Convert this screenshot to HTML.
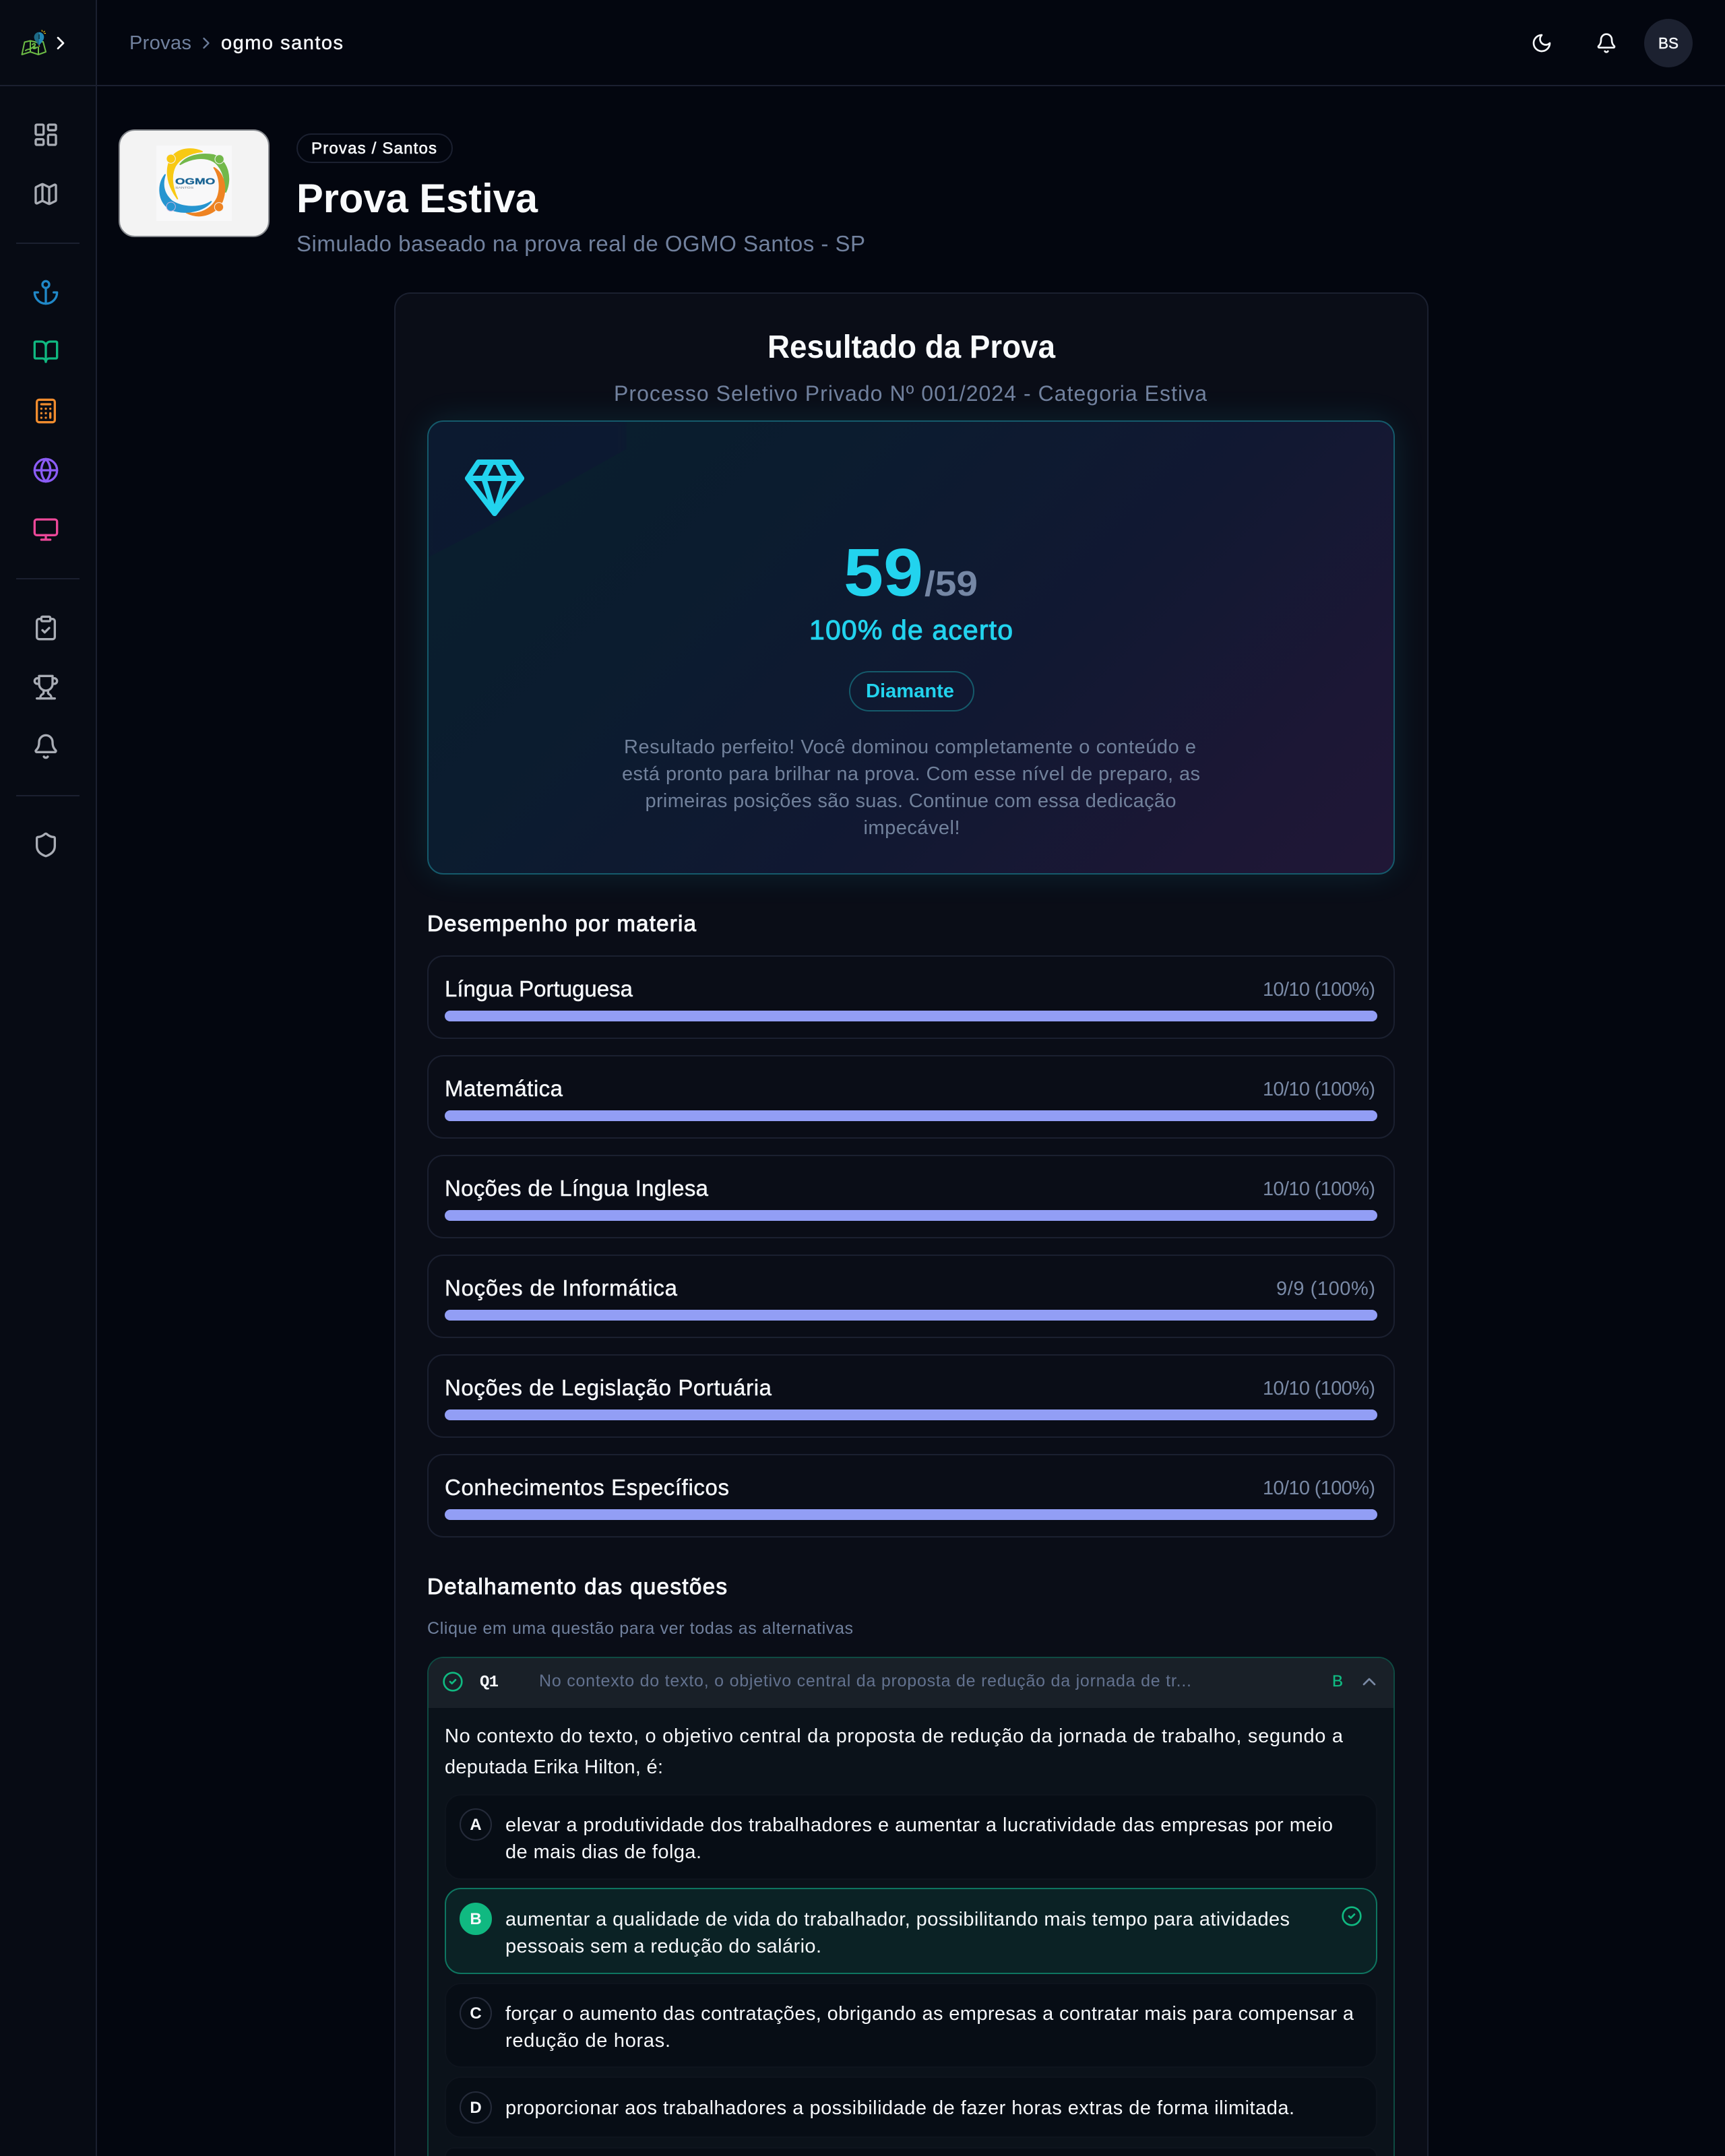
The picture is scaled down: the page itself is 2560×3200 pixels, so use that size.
<!DOCTYPE html>
<html lang="pt-BR">
<head>
<meta charset="utf-8">
<title>Prova Estiva</title>
<style>
html,body{margin:0;padding:0;background:#03060f;width:2560px;height:3200px;overflow:hidden}
*{box-sizing:border-box}
.abs{position:absolute}
#page{position:relative;width:2560px;height:3200px;overflow:hidden;background:#03060f}
#side{left:0;top:0;width:144px;height:3200px;background:#070b14;border-right:2px solid #1b2030}
#top{left:144px;top:0;width:2416px;height:128px;background:#03060f}
#topline{left:0;top:126px;width:2560px;height:2px;background:#1b2030}
.div{left:24px;width:94px;height:2px;background:#1b2030}
#logo{left:176px;top:192px;width:224px;height:160px;background:#f3f3f3;border:2.5px solid #85888d;border-radius:24px}
#logoimg{left:232px;top:216px;width:112px;height:112px;background:#f8f8f9}
#badge{left:440px;top:198px;width:232px;height:44px;border:2px solid #1b2030;border-radius:22px}
#avatar{left:2440px;top:28px;width:72px;height:72px;border-radius:50%;background:#1c2130}
#card{left:585px;top:434px;width:1535px;height:2766px;background:#0a0d17;border:2px solid #1b2030;border-bottom:0;border-radius:24px 24px 0 0}
#hero{left:634px;top:624px;width:1436px;height:674px;border:2px solid #155a6b;border-radius:24px;overflow:hidden;background:linear-gradient(135deg,#091f2d 0%,#0b1c2f 30%,#111832 60%,#1c1735 85%,#201736 100%);box-shadow:0 0 48px rgba(34,211,238,.12)}
#blob{left:-6px;top:-6px;width:300px;height:210px;background:#15123a;opacity:.3;clip-path:polygon(0 0,100% 0,100% 22%,30% 78%,0 100%);filter:blur(6px)}
.sub{left:634px;width:1436px;height:124px;border:2px solid #1b2030;border-radius:24px;background:#0a0d17}
.bar{left:660px;width:1384px;height:16px;border-radius:8px;background:#929ef5}
#qbox{left:634px;top:2459px;width:1436px;height:741px;background:#0b121a;border:2px solid #0f4a42;border-bottom:0;border-radius:24px 24px 0 0;overflow:hidden}
#qhead{left:0;top:0;width:100%;height:74px;background:#192028}
.opt{left:660px;width:1384px;border:2px solid #0e141d;border-radius:24px;background:#070d15}
#optb{background:#0b2225;border-color:#0e7560}
.circ{left:682px;width:48px;height:48px;border-radius:50%;border:2px solid #252b3a}
svg.ov{position:absolute;left:0;top:0;display:block}
text{font-family:"Liberation Sans",sans-serif;white-space:pre}
.mut{fill:#71819e}
.wht{fill:#f6f8fb}
.med{stroke:#f6f8fb;stroke-width:.45}
.ic{fill:none;stroke-linecap:round;stroke-linejoin:round}
</style>
</head>
<body>
<div id="page">
  <div id="side" class="abs"></div>
  <div id="top" class="abs"></div>
  <div id="topline" class="abs"></div>
  <div class="abs div" style="top:360px"></div>
  <div class="abs div" style="top:858px"></div>
  <div class="abs div" style="top:1180px"></div>

  <div id="logo" class="abs"></div>
  <div id="logoimg" class="abs"></div>
  <div id="badge" class="abs"></div>
  <div id="avatar" class="abs"></div>

  <div id="card" class="abs"></div>
  <div id="hero" class="abs"><div id="blob" class="abs"></div></div>

  <div class="abs sub" style="top:1418px"></div><div class="abs bar" style="top:1500px"></div>
  <div class="abs sub" style="top:1566px"></div><div class="abs bar" style="top:1648px"></div>
  <div class="abs sub" style="top:1714px"></div><div class="abs bar" style="top:1796px"></div>
  <div class="abs sub" style="top:1862px"></div><div class="abs bar" style="top:1944px"></div>
  <div class="abs sub" style="top:2010px"></div><div class="abs bar" style="top:2092px"></div>
  <div class="abs sub" style="top:2158px"></div><div class="abs bar" style="top:2240px"></div>

  <div id="qbox" class="abs"><div id="qhead" class="abs"></div></div>
  <div class="abs opt" style="top:2663px;height:127px"></div>
  <div id="optb" class="abs opt" style="top:2802px;height:128px"></div>
  <div class="abs opt" style="top:2943px;height:126px"></div>
  <div class="abs opt" style="top:3082px;height:91px"></div>
  <div class="abs opt" style="top:3187px;height:13px;border-bottom:0;border-radius:24px 24px 0 0"></div>
  <div class="abs circ" style="top:2684px"></div>
  <div class="abs circ" style="top:2824px;background:#10b981;border-color:#10b981"></div>
  <div class="abs circ" style="top:2964px"></div>
  <div class="abs circ" style="top:3104px"></div>

  <svg class="ov" width="2560" height="3200" viewBox="0 0 2560 3200" xmlns="http://www.w3.org/2000/svg">
    <!-- app logo -->
    <g class="ic" stroke="#6cbb45" stroke-width="2">
      <path d="M32.500 81 36.500 62.500 45 60.500 55 63M61 62 64 62 68 77 57 81 45 77 32.500 81M45 61 45 77M57 70 57 81"/>
      <path d="M38 75C41 72 44 74 46 72S51 70 52 70M48 66C50 64 53 65 52 67S48 69 49 71 53 72 55 70"/>
    </g>
    <path d="M58 68C55 63 50.700 60 50.700 55A7.300 7.300 0 0 1 65.300 55C65.300 60 61 63 58 68Z" fill="#2389b5"/>
    <path d="M58 48A7.300 7.300 0 0 0 50.700 55C50.700 60 55 63 58 68Z" fill="#1d6a86"/>
    <path d="M58 51v7" stroke="#0d2c3a" stroke-width="1.500"/>
    <path d="M62 44.500l.8 2.500M66.500 46l-2 2M68 49.500h-2.500M57.500 67.500l1.500 1.500" stroke="#f1c40f" stroke-width="1.200"/>
    <path class="ic" stroke="#fff" stroke-width="2" transform="translate(74 48) scale(1.333)" d="m9 18 6-6-6-6"/>

    <!-- breadcrumb -->
    <text x="192" y="73" font-size="29" class="mut" textLength="92">Provas</text>
    <path class="ic" stroke="#6b7c9a" stroke-width="2" transform="translate(292 50) scale(1.167)" d="m9 18 6-6-6-6"/>
    <text x="328" y="73" font-size="29" class="wht med" textLength="181">ogmo santos</text>

    <!-- top right icons -->
    <g class="ic" stroke="#f6f8fb" stroke-width="2">
      <path transform="translate(2272 48) scale(1.333)" d="M12 3a6 6 0 0 0 9 9 9 9 0 1 1-9-9Z"/>
      <g transform="translate(2368 48) scale(1.333)">
        <path d="M10.268 21a2 2 0 0 0 3.464 0"/>
        <path d="M3.262 15.326A1 1 0 0 0 4 17h16a1 1 0 0 0 .74-1.673C19.41 13.956 18 12.499 18 8A6 6 0 0 0 6 8c0 4.499-1.411 5.956-2.738 7.326"/>
      </g>
    </g>
    <text x="2461" y="72" font-size="23" class="wht med" textLength="30" lengthAdjust="spacingAndGlyphs">BS</text>

    <!-- sidebar icons -->
    <g class="ic" stroke-width="2">
      <g stroke="#a9adb5">
        <g transform="translate(48 180) scale(1.667)"><rect width="7" height="9" x="3" y="3" rx="1"/><rect width="7" height="5" x="14" y="3" rx="1"/><rect width="7" height="9" x="14" y="12" rx="1"/><rect width="7" height="5" x="3" y="16" rx="1"/></g>
        <g transform="translate(48 268) scale(1.667)"><path d="M14.106 5.553a2 2 0 0 0 1.788 0l3.659-1.830A1 1 0 0 1 21 4.619v12.764a1 1 0 0 1-.553.894l-4.553 2.277a2 2 0 0 1-1.788 0l-4.212-2.106a2 2 0 0 0-1.788 0l-3.659 1.830A1 1 0 0 1 3 19.381V6.618a1 1 0 0 1 .553-.894l4.553-2.277a2 2 0 0 1 1.788 0z"/><path d="M15 5.764v15"/><path d="M9 3.236v15"/></g>
        <g transform="translate(48 912) scale(1.667)"><rect width="8" height="4" x="8" y="2" rx="1"/><path d="M16 4h2a2 2 0 0 1 2 2v14a2 2 0 0 1-2 2H6a2 2 0 0 1-2-2V6a2 2 0 0 1 2-2h2"/><path d="m9 14 2 2 4-4"/></g>
        <g transform="translate(48 1000) scale(1.667)"><path d="M6 9H4.500a2.500 2.500 0 0 1 0-5H6"/><path d="M18 9h1.500a2.500 2.500 0 0 0 0-5H18"/><path d="M4 22h16"/><path d="M10 14.660V17c0 .55-.47.98-.97 1.210C7.850 18.750 7 20.240 7 22"/><path d="M14 14.660V17c0 .55.47.98.97 1.210C16.150 18.750 17 20.240 17 22"/><path d="M18 2H6v7a6 6 0 0 0 12 0V2Z"/></g>
        <g transform="translate(48 1088) scale(1.667)"><path d="M10.268 21a2 2 0 0 0 3.464 0"/><path d="M3.262 15.326A1 1 0 0 0 4 17h16a1 1 0 0 0 .74-1.673C19.410 13.956 18 12.499 18 8A6 6 0 0 0 6 8c0 4.499-1.411 5.956-2.738 7.326"/></g>
        <g transform="translate(48 1234) scale(1.667)"><path d="M20 13c0 5-3.500 7.500-7.660 8.950a1 1 0 0 1-.67-.01C7.500 20.500 4 18 4 13V6a1 1 0 0 1 1-1c2 0 4.500-1.200 6.240-2.720a1.170 1.170 0 0 1 1.520 0C14.510 3.810 17 5 19 5a1 1 0 0 1 1 1z"/></g>
      </g>
      <g stroke="#2088c8" transform="translate(48 414) scale(1.667)"><path d="M12 22V8"/><path d="M5 12H2a10 10 0 0 0 20 0h-3"/><circle cx="12" cy="5" r="3"/></g>
      <g stroke="#10b981" transform="translate(48 502) scale(1.667)"><path d="M12 7v14"/><path d="M3 18a1 1 0 0 1-1-1V4a1 1 0 0 1 1-1h5a4 4 0 0 1 4 4 4 4 0 0 1 4-4h5a1 1 0 0 1 1 1v13a1 1 0 0 1-1 1h-6a3 3 0 0 0-3 3 3 3 0 0 0-3-3z"/></g>
      <g stroke="#f08c2e" transform="translate(48 590) scale(1.667)"><rect width="16" height="20" x="4" y="2" rx="2"/><path d="M8 6h8M16 14v4M16 10h.01M12 10h.01M8 10h.01M12 14h.01M8 14h.01M12 18h.01M8 18h.01"/></g>
      <g stroke="#8b5cf6" transform="translate(48 678) scale(1.667)"><circle cx="12" cy="12" r="10"/><path d="M12 2a14.500 14.500 0 0 0 0 20 14.500 14.500 0 0 0 0-20"/><path d="M2 12h20"/></g>
      <g stroke="#ec4899" transform="translate(48 766) scale(1.667)"><rect width="20" height="14" x="2" y="3" rx="2"/><path d="M8 21h8M12 17v4"/></g>
    </g>

    <!-- ogmo logo -->
    <g transform="translate(160 170) scale(.3333)" stroke-linejoin="round">
      <path d="M420 165C375 145 315 150 285 190C258 230 255 300 310 375C285 320 280 270 300 230C320 195 365 170 420 165Z" fill="#f8c914" stroke="#f8c914" stroke-width="6"/>
      <circle cx="281" cy="197" r="20" fill="#f8c914" stroke="#f3f3f3" stroke-width="3"/>
      <path d="M322 222C350 185 410 170 470 180C530 200 555 280 525 345C525 280 505 230 470 208C425 185 370 195 322 222Z" fill="#72b84a" stroke="#72b84a" stroke-width="6"/>
      <circle cx="497" cy="199" r="20" fill="#72b84a" stroke="#f3f3f3" stroke-width="3"/>
      <path d="M473 237C520 265 530 330 510 385C485 440 415 470 350 437C410 450 465 420 488 370C503 330 500 280 473 237Z" fill="#ee8322" stroke="#ee8322" stroke-width="6"/>
      <circle cx="495" cy="412" r="20" fill="#ee8322" stroke="#f3f3f3" stroke-width="3"/>
      <path d="M255 268C222 310 225 375 262 410C310 450 420 440 460 388C410 420 330 415 285 385C250 355 240 315 255 268Z" fill="#2695d0" stroke="#2695d0" stroke-width="6"/>
      <circle cx="281" cy="410" r="20" fill="#2695d0" stroke="#c9b5e0" stroke-width="3"/>
      <text x="300" y="311" font-size="40" font-weight="700" fill="#1a6494" textLength="178" lengthAdjust="spacingAndGlyphs" stroke="#1a6494" stroke-width="1">OGMO</text>
      <text x="300" y="330" font-size="13" fill="#79808a" textLength="82" lengthAdjust="spacingAndGlyphs">SANTOS</text>
    </g>

    <!-- page header -->
    <text x="462" y="228" font-size="24" class="wht" stroke="#f6f8fb" stroke-width=".6" textLength="186">Provas / Santos</text>
    <text x="440" y="315" font-size="60" font-weight="700" fill="#f8fafc" textLength="358" lengthAdjust="spacingAndGlyphs">Prova Estiva</text>
    <text x="440" y="373" font-size="33" class="mut" textLength="844">Simulado baseado na prova real de OGMO Santos - SP</text>

    <!-- card header -->
    <text x="1139" y="531" font-size="48" font-weight="700" fill="#f8fafc" textLength="427" lengthAdjust="spacingAndGlyphs">Resultado da Prova</text>
    <text x="911" y="595" font-size="32" class="mut" textLength="880">Processo Seletivo Privado Nº 001/2024 - Categoria Estiva</text>

    <!-- hero -->
    <g class="ic" stroke="#22d3ee" stroke-width="2" transform="translate(686 674) scale(4)"><path d="M6 3h12l4 6-10 13L2 9Z"/><path d="M11 3 8 9l4 13 4-13-3-6"/><path d="M2 9h20"/></g>
    <text x="1252" y="884" font-size="100" font-weight="700" fill="#22d3ee" textLength="118" lengthAdjust="spacingAndGlyphs">59</text>
    <text x="1372" y="884" font-size="52" font-weight="700" fill="#7587a5" textLength="79" lengthAdjust="spacingAndGlyphs">/59</text>
    <text x="1201" y="949" font-size="41" fill="#22d3ee" stroke="#22d3ee" stroke-width="1" textLength="302">100% de acerto</text>
    <rect x="1261" y="997" width="184" height="58" rx="29" fill="none" stroke="#155a6b" stroke-width="2"/>
    <text x="1285" y="1035" font-size="29" font-weight="700" fill="#22d3ee" textLength="131" lengthAdjust="spacingAndGlyphs">Diamante</text>
    <g font-size="29" fill="#71819b">
      <text x="926" y="1118" textLength="849">Resultado perfeito! Você dominou completamente o conteúdo e</text>
      <text x="923" y="1158" textLength="858">está pronto para brilhar na prova. Com esse nível de preparo, as</text>
      <text x="957.500" y="1198" textLength="788">primeiras posições são suas. Continue com essa dedicação</text>
      <text x="1281.500" y="1238" textLength="143">impecável!</text>
    </g>

    <!-- performance -->
    <text x="634" y="1382" font-size="33" fill="#f6f8fb" stroke="#f6f8fb" stroke-width="1" textLength="399">Desempenho por materia</text>
    <g font-size="33" class="wht med">
      <text x="660" y="1479" textLength="279">Língua Portuguesa</text>
      <text x="660" y="1627" textLength="175">Matemática</text>
      <text x="660" y="1775" textLength="391">Noções de Língua Inglesa</text>
      <text x="660" y="1923" textLength="345">Noções de Informática</text>
      <text x="660" y="2071" textLength="485">Noções de Legislação Portuária</text>
      <text x="660" y="2219" textLength="422">Conhecimentos Específicos</text>
    </g>
    <g font-size="29" fill="#7a8aa6">
      <text x="1874" y="1478" textLength="167">10/10 (100%)</text>
      <text x="1874" y="1626" textLength="167">10/10 (100%)</text>
      <text x="1874" y="1774" textLength="167">10/10 (100%)</text>
      <text x="1894" y="1922" textLength="147">9/9 (100%)</text>
      <text x="1874" y="2070" textLength="167">10/10 (100%)</text>
      <text x="1874" y="2218" textLength="167">10/10 (100%)</text>
    </g>

    <!-- questions -->
    <text x="634" y="2366" font-size="33" fill="#f6f8fb" stroke="#f6f8fb" stroke-width="1" textLength="445">Detalhamento das questões</text>
    <text x="634" y="2425" font-size="25" class="mut" textLength="632">Clique em uma questão para ver todas as alternativas</text>

    <g class="ic" stroke="#10b981" stroke-width="2" transform="translate(656 2480) scale(1.333)"><circle cx="12" cy="12" r="10"/><path d="m9 12 2 2 4-4"/></g>
    <text x="712" y="2503" font-size="24" font-weight="700" fill="#f6f8fb" style="font-family:'Liberation Mono',monospace" textLength="28">Q1</text>
    <text x="800" y="2503" font-size="25" fill="#63728f" textLength="968">No contexto do texto, o objetivo central da proposta de redução da jornada de tr...</text>
    <text x="1977" y="2503" font-size="24" fill="#10b981" stroke="#10b981" stroke-width=".3">B</text>
    <path class="ic" stroke="#7a8aa5" stroke-width="2" transform="translate(2016 2480) scale(1.333)" d="m18 15-6-6-6 6"/>

    <g font-size="29" fill="#f6f8fb">
      <text x="660" y="2586" textLength="1333">No contexto do texto, o objetivo central da proposta de redução da jornada de trabalho, segundo a</text>
      <text x="660" y="2632" textLength="324">deputada Erika Hilton, é:</text>
      <text x="750" y="2718" textLength="1228">elevar a produtividade dos trabalhadores e aumentar a lucratividade das empresas por meio</text>
      <text x="750" y="2758" textLength="291">de mais dias de folga.</text>
      <text x="750" y="2858" textLength="1164">aumentar a qualidade de vida do trabalhador, possibilitando mais tempo para atividades</text>
      <text x="750" y="2898" textLength="469">pessoais sem a redução do salário.</text>
      <text x="750" y="2998" textLength="1259">forçar o aumento das contratações, obrigando as empresas a contratar mais para compensar a</text>
      <text x="750" y="3038" textLength="245">redução de horas.</text>
      <text x="750" y="3138" textLength="1171">proporcionar aos trabalhadores a possibilidade de fazer horas extras de forma ilimitada.</text>
    </g>
    <g font-size="24" font-weight="700" fill="#f6f8fb" text-anchor="middle">
      <text x="706" y="2716">A</text>
      <text x="706" y="2856">B</text>
      <text x="706" y="2996">C</text>
      <text x="706" y="3136">D</text>
    </g>
    <g class="ic" stroke="#10b981" stroke-width="2" transform="translate(1990 2828) scale(1.333)"><circle cx="12" cy="12" r="10"/><path d="m9 12 2 2 4-4"/></g>
  </svg>
</div>
</body>
</html>
